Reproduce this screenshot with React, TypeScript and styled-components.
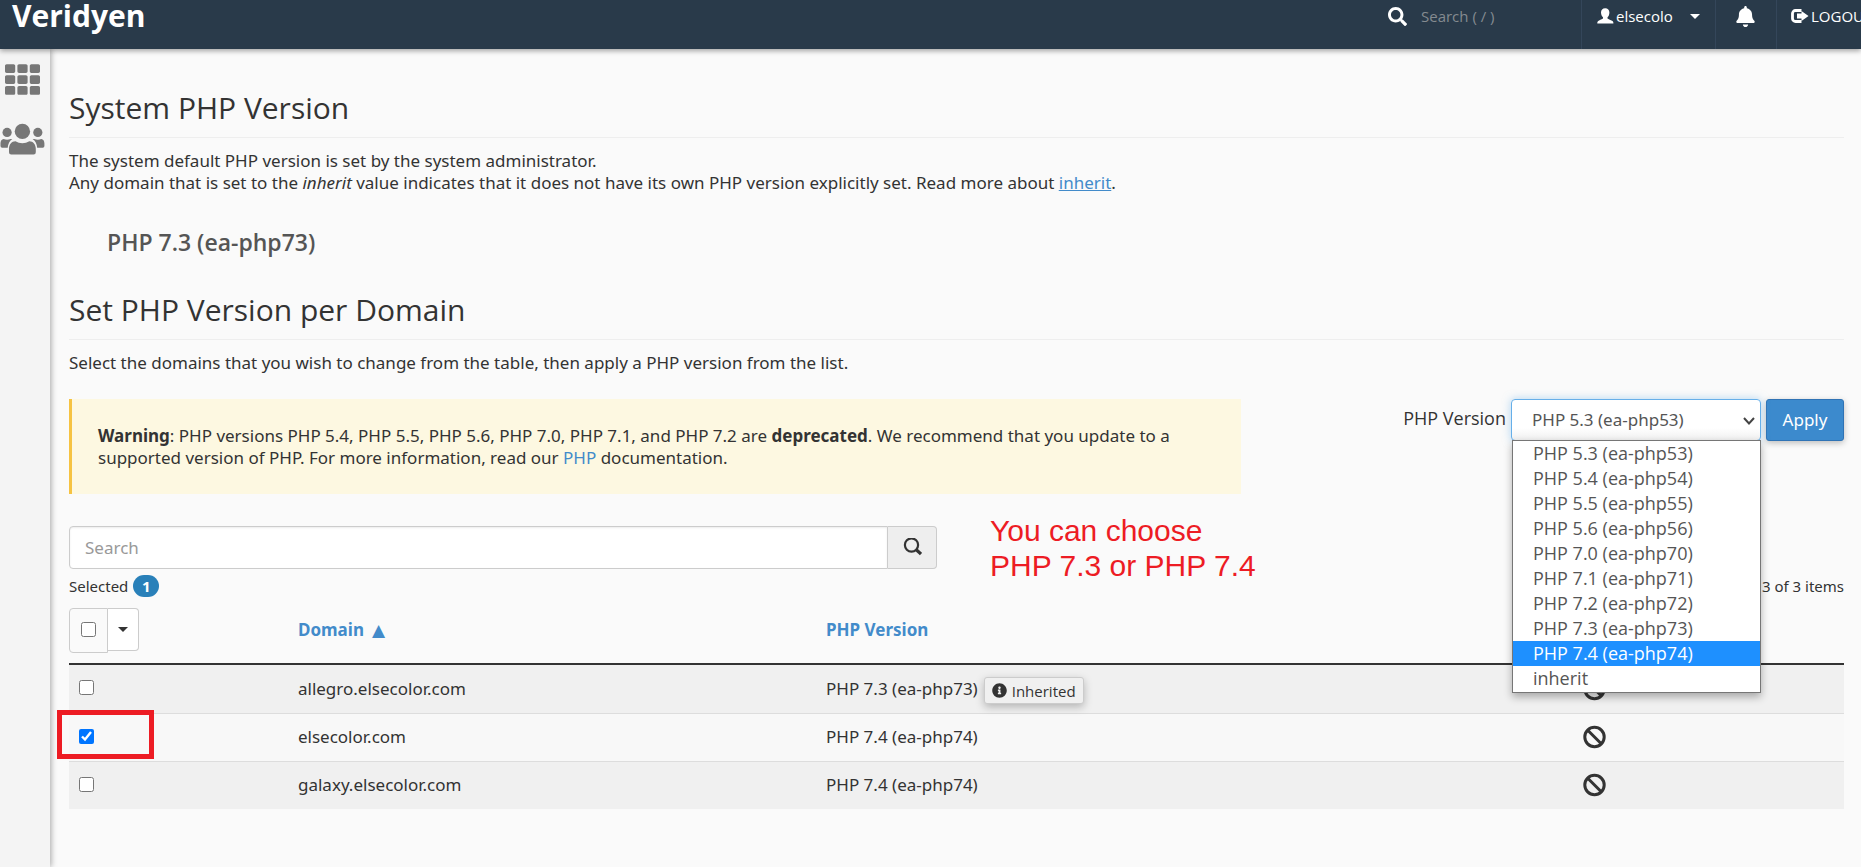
import React, { useState } from "react";
import styled, { createGlobalStyle, css } from "styled-components";
import { FaSearch, FaTh, FaBell, FaInfoCircle } from "react-icons/fa";

const GlobalStyle = createGlobalStyle`
  *, *::before, *::after { box-sizing: border-box; }
  body {
    margin: 0;
    background: #fafafa;
    color: #333;
    font-family: "Noto Sans", "Open Sans", sans-serif;
    font-size: 17px;
    line-height: 22px;
    overflow-x: hidden;
  }
  button, input, select { font: inherit; color: inherit; }
`;

const Page = styled.div`
  display: flex;
  flex-direction: column;
  min-height: 100vh;
`;

const TopBar = styled.header`
  position: relative;
  z-index: 2;
  display: flex;
  align-items: stretch;
  justify-content: space-between;
  height: 49px;
  background: #293a4a;
  color: #fff;
  box-shadow: 0 2px 5px rgba(0, 0, 0, 0.35);
  overflow: hidden;
  font-family: "Open Sans", sans-serif;
  font-size: 15px;
`;

const Brand = styled.a`
  padding-left: 12px;
  color: #fff;
  font-size: 30px;
  font-weight: 700;
  line-height: 32px;
  text-decoration: none;
`;

const TopNav = styled.nav`
  display: flex;
  width: 473px;
  flex: none;
`;

const TopSearch = styled.label`
  display: flex;
  gap: 14px;
  width: 193px;
  flex: none;
  height: 32px;
  align-items: center;
`;

const TopSearchInput = styled.input`
  width: 150px;
  padding: 0;
  border: 0;
  outline: 0;
  background: transparent;
  &::placeholder { color: #848a90; opacity: 1; }
`;

const NavItem = styled.div<{ $width: number; $pad: number }>`
  flex: none;
  width: ${(p) => p.$width}px;
  padding-left: ${(p) => p.$pad}px;
  border-left: 1px solid #34465a;
`;

const NavButton = styled.button`
  display: flex;
  align-items: center;
  gap: 2px;
  height: 32px;
  padding: 0;
  border: 0;
  background: none;
  white-space: nowrap;
`;

const Caret = styled.span<{ $gap?: number }>`
  margin-left: ${(p) => p.$gap ?? 0}px;
  border: 5px solid transparent;
  border-top-color: currentColor;
  border-bottom: 0;
`;

const Body = styled.div`
  display: flex;
  flex: 1;
`;

const SideBar = styled.nav`
  flex: none;
  width: 50px;
  display: flex;
  flex-direction: column;
  gap: 20px;
  padding-top: 10px;
  background: #f4f4f4;
  box-shadow: 1px 0 6px rgba(0, 0, 0, 0.35);
  color: #777;
`;

const SideLink = styled.a`
  display: flex;
  align-items: center;
  justify-content: center;
  width: 45px;
  height: 40px;
  color: inherit;
`;

const Content = styled.main`
  flex: 1;
  min-width: 0;
  padding: 38px 17px 40px 19px;
`;

const Heading = styled.h2`
  margin: 0 0 12px;
  padding-bottom: 9px;
  border-bottom: 1px solid #eee;
  font-family: "Open Sans", sans-serif;
  font-size: 30px;
  font-weight: 400;
  line-height: 41px;
`;

const Text = styled.p`
  margin: 0;
`;

const TextLink = styled.a<{ $underline?: boolean }>`
  color: #428bca;
  text-decoration: ${(p) => (p.$underline ? "underline" : "none")};
`;

const SystemVersion = styled.p`
  margin: 34px 0 33px;
  padding-left: 38px;
  color: #555;
  font-family: "Open Sans", sans-serif;
  font-size: 23px;
  font-weight: 600;
  line-height: 28px;
`;

const ControlRow = styled.div`
  display: flex;
  justify-content: space-between;
  align-items: flex-start;
  margin-top: 25px;
`;

const Warning = styled.div`
  width: 66%;
  min-height: 95px;
  padding: 26px 40px 25px 26px;
  border-left: 3px solid #f6c342;
  background: #fdf8e1;
`;

const ApplyForm = styled.form`
  display: flex;
  align-items: flex-start;
  gap: 5px;
`;

const Label = styled.label`
  font-family: "Open Sans", sans-serif;
  font-size: 18px;
  line-height: 38px;
`;

const SelectBox = styled.div`
  position: relative;
  width: 250px;
`;

const VersionSelect = styled.select`
  appearance: none;
  display: block;
  width: 100%;
  height: 42px;
  padding: 0 20px;
  border: 1px solid #66afe9;
  border-radius: 4px;
  outline: 0;
  background: linear-gradient(#fff 70%, #f0f0f0);
  box-shadow: 0 0 9px rgba(102, 175, 233, 0.5);
  color: #555;
`;

const Chevron = styled.svg`
  position: absolute;
  right: 5px;
  top: 17px;
  pointer-events: none;
`;

const OptionList = styled.ul`
  position: absolute;
  z-index: 3;
  top: 41px;
  left: 1px;
  right: 0;
  margin: 0;
  padding: 0 0 1px;
  border: 1px solid #767676;
  background: #fff;
  box-shadow: 0 4px 8px rgba(0, 0, 0, 0.3);
  font-family: "Open Sans", sans-serif;
  font-size: 18px;
  list-style: none;
`;

const Option = styled.li<{ $active: boolean }>`
  padding-left: 20px;
  color: ${(p) => (p.$active ? "#fff" : "#555")};
  background: ${(p) => (p.$active ? "#1e90ff" : "transparent")};
  line-height: 25px;
`;

const ApplyButton = styled.button`
  width: 78px;
  height: 42px;
  padding: 0;
  border: 1px solid #2f73b5;
  border-radius: 3px;
  background: #3c8acd;
  box-shadow: 0 2px 6px rgba(0, 0, 0, 0.25);
  color: #fff;
`;

const FilterRow = styled.div`
  display: flex;
  align-items: flex-start;
  margin-top: 32px;
`;

const SearchGroup = styled.form`
  display: flex;
  width: 48.9%;
  height: 43px;
`;

const SearchInput = styled.input`
  flex: 1;
  min-width: 0;
  padding: 0 15px;
  border: 1px solid #ccc;
  border-radius: 4px 0 0 4px;
  outline: 0;
  background: #fff;
  box-shadow: inset 0 1px 2px rgba(0, 0, 0, 0.08);
  &::placeholder { color: #999; opacity: 1; }
`;

const SearchButton = styled.button`
  display: flex;
  align-items: center;
  justify-content: center;
  width: 49px;
  padding: 0;
  border: 1px solid #ccc;
  border-left: 0;
  border-radius: 0 4px 4px 0;
  background: #eee;
`;

const Note = styled.p`
  margin: -13px 0 -14px 53px;
  color: #ed1c24;
  font-family: "Liberation Sans", Arial, sans-serif;
  font-size: 30px;
  line-height: 35px;
`;

const StatusRow = styled.div`
  display: flex;
  justify-content: space-between;
  align-items: center;
  margin-top: 6px;
  font-size: 15px;
`;

const Selected = styled.span`
  display: flex;
  align-items: center;
  gap: 5px;
`;

const Badge = styled.span`
  width: 26px;
  border-radius: 11px;
  background: #2980b9;
  color: #fff;
  font-weight: 700;
  text-align: center;
`;

const Table = styled.table`
  width: 100%;
  margin-top: 10px;
  border-collapse: collapse;
  table-layout: fixed;
`;

const HeadCell = styled.th<{ $width: string }>`
  width: ${(p) => p.$width};
  height: 57px;
  padding: 0 0 10px;
  border-bottom: 2px solid #333;
  color: #428bca;
  font-weight: 700;
  text-align: left;
`;

const Row = styled.tr<{ $striped: boolean }>`
  height: 48px;
  background: ${(p) => (p.$striped ? "#f0f0f0" : "#f8f8f8")};
  &:first-child { height: 49px; }
  & + & { border-top: 1px solid #ddd; }
`;

const Cell = styled.td<{ $action?: boolean }>`
  position: relative;
  padding: 0;
  vertical-align: middle;
  ${(p) => p.$action && css`line-height: 0;`}
`;

const SortButton = styled.button`
  display: flex;
  align-items: center;
  gap: 8px;
  padding: 0;
  border: 0;
  background: none;
  font-weight: 700;
`;

const SortArrow = styled.span`
  font-family: "DejaVu Sans", sans-serif;
  font-weight: 400;
`;

const SelectAll = styled.div`
  display: flex;
  align-items: flex-start;
  color: #333;
`;

const SelectAllBox = styled.label`
  display: flex;
  justify-content: center;
  width: 39px;
  height: 45px;
  padding-top: 13px;
  border: 1px solid #ccc;
  border-radius: 4px 0 0 4px;
`;

const MenuButton = styled.button`
  display: flex;
  align-items: center;
  justify-content: center;
  width: 31px;
  height: 43px;
  padding: 0;
  border: 1px solid #ccc;
  border-left: 0;
  border-radius: 0 4px 4px 0;
  background: #fff;
`;

const Check = styled.input`
  display: block;
  width: 15px;
  height: 15px;
  margin: 0;
  accent-color: #0075ff;
`;

const RowCheck = styled(Check)`
  margin: 0 0 2px 10px;
`;

const Highlight = styled.span`
  position: absolute;
  top: -4px;
  left: -12px;
  width: 97px;
  height: 49px;
  border: 5px solid #ed1c24;
  pointer-events: none;
`;

const VersionCell = styled.div`
  display: flex;
  align-items: center;
  gap: 6px;
`;

const Inherited = styled.span`
  display: flex;
  align-items: center;
  gap: 5px;
  height: 27px;
  margin-top: 4px;
  padding: 0 7px;
  border: 1px solid #ccc;
  border-radius: 3px;
  background: #f0f0f0;
  box-shadow: 0 3px 8px rgba(0, 0, 0, 0.25);
  font-family: "Open Sans", sans-serif;
  font-size: 15px;
`;

const BanIcon = () => (
  <svg width="24" height="24" viewBox="0 0 24 24" fill="none" stroke="#333" strokeWidth="3" aria-label="No PHP-FPM" role="img">
    <circle cx="12.5" cy="12" r="9.7" />
    <path d="M6 5.500 19 18.500" />
  </svg>
);

const UsersIcon = () => (
  <svg width="45" height="32" viewBox="0 0 45 32" fill="currentColor" aria-hidden="true">
    <circle cx="22.4" cy="8.400" r="7.700" />
    <circle cx="7.100" cy="9.400" r="4.600" />
    <circle cx="37.800" cy="9.400" r="4.600" />
    <path d="M15.500 18.200c4 2.600 9.800 2.600 13.800 0 4 0 6.500 3.400 6.500 7.600v3.400a2.200 2.200 0 0 1-2.200 2.200H11.200A2.200 2.200 0 0 1 9 29.200v-3.400c0-4.200 2.500-7.600 6.500-7.600z" />
    <path d="M3.600 16c2.300 1.100 4.600 1.100 7 0h1.700c-2.600 1.700-4.300 4.900-4.600 8.700H2.200A1.700 1.700 0 0 1 .5 23v-2.700C.5 18 1.700 16.200 3.600 16z" />
    <path d="M41.300 16c-2.300 1.100-4.600 1.100-7 0h-1.700c2.600 1.700 4.300 4.900 4.600 8.700h5.500a1.700 1.700 0 0 0 1.700-1.700v-2.700c0-2.300-1.200-4.100-3.100-4.300z" />
  </svg>
);

const UserIcon = () => (
  <svg width="17" height="16" viewBox="0 0 17 16" fill="#fff" aria-hidden="true">
    <path d="M8.2 0.3c2.6 0 4.2 1.7 4.2 4.2 0 2.200-.9 3.900-1.900 4.800v1.200c1.800 1.100 3.900 1.800 5 2.500.7.5.9 1.200.9 2.400H.3c0-1.300.2-1.900.9-2.400 1.100-.7 3.100-1.500 4.800-2.500V9.300C5 8.400 4 6.700 4 4.500 4 2 5.600.3 8.200.3z" />
  </svg>
);

const LogoutIcon = () => (
  <svg width="18" height="14" viewBox="0 0 18 14" aria-hidden="true">
    <path d="M10.500 1.500H4.500a3 3 0 0 0-3 3v5a3 3 0 0 0 3 3h6" fill="none" stroke="#fff" strokeWidth="2.800" />
    <path d="M10.500 2 17.500 7 10.500 12V9.500H6V4.500h4.500z" fill="#fff" />
  </svg>
);

const SearchIcon = () => (
  <svg width="20" height="20" viewBox="-1 1 20 20" fill="none" stroke="#333" aria-hidden="true">
    <circle cx="8.500" cy="8" r="6.600" strokeWidth="2.200" />
    <path d="M13 12.500 18 17" strokeWidth="3.200" />
  </svg>
);

const versions = [
  "PHP 5.3 (ea-php53)",
  "PHP 5.4 (ea-php54)",
  "PHP 5.5 (ea-php55)",
  "PHP 5.6 (ea-php56)",
  "PHP 7.0 (ea-php70)",
  "PHP 7.1 (ea-php71)",
  "PHP 7.2 (ea-php72)",
  "PHP 7.3 (ea-php73)",
  "PHP 7.4 (ea-php74)",
  "inherit",
];

const domains = [
  { name: "allegro.elsecolor.com", version: "PHP 7.3 (ea-php73)", inherited: true },
  { name: "elsecolor.com", version: "PHP 7.4 (ea-php74)", inherited: false },
  { name: "galaxy.elsecolor.com", version: "PHP 7.4 (ea-php74)", inherited: false },
];

export default function App() {
  const [picked, setPicked] = useState<string[]>(["elsecolor.com"]);
  const [version, setVersion] = useState(versions[0]);
  const [active, setActive] = useState("PHP 7.4 (ea-php74)");

  const toggle = (name: string) =>
    setPicked((old) => (old.includes(name) ? old.filter((n) => n !== name) : [...old, name]));
  const allPicked = picked.length === domains.length;

  return (
    <Page>
      <GlobalStyle />
      <TopBar>
        <Brand href="#">Veridyen</Brand>
        <TopNav aria-label="Account">
          <TopSearch>
            <FaSearch size={19} />
            <TopSearchInput type="text" placeholder="Search ( / )" aria-label="Search features" />
          </TopSearch>
          <NavItem $width={134} $pad={15}>
            <NavButton type="button"><UserIcon />elsecolo<Caret $gap={15} /></NavButton>
          </NavItem>
          <NavItem $width={61} $pad={19}>
            <NavButton type="button" aria-label="Notifications"><FaBell size={21} /></NavButton>
          </NavItem>
          <NavItem $width={120} $pad={14}>
            <NavButton type="button"><LogoutIcon />LOGOUT</NavButton>
          </NavItem>
        </TopNav>
      </TopBar>
      <Body>
        <SideBar aria-label="Main">
          <SideLink href="#" aria-label="Home"><FaTh size={35} /></SideLink>
          <SideLink href="#" aria-label="User manager"><UsersIcon /></SideLink>
        </SideBar>
        <Content>
          <Heading>System PHP Version</Heading>
          <Text>
            The system default PHP version is set by the system administrator.
            <br />
            Any domain that is set to the <em>inherit</em> value indicates that it does not have its own PHP
            version explicitly set. Read more about <TextLink href="#" $underline>inherit</TextLink>.
          </Text>
          <SystemVersion>PHP 7.3 (ea-php73)</SystemVersion>
          <Heading>Set PHP Version per Domain</Heading>
          <Text>Select the domains that you wish to change from the table, then apply a PHP version from the list.</Text>
          <ControlRow>
            <Warning>
              <strong>Warning</strong>: PHP versions PHP 5.4, PHP 5.5, PHP 5.6, PHP 7.0, PHP 7.1, and PHP 7.2
              are <strong>deprecated</strong>. We recommend that you update to a supported version of PHP. For
              more information, read our <TextLink href="#">PHP</TextLink> documentation.
            </Warning>
            <ApplyForm onSubmit={(e) => e.preventDefault()}>
              <Label htmlFor="version">PHP Version</Label>
              <SelectBox>
                <VersionSelect id="version" value={version} onChange={(e) => setVersion(e.target.value)}>
                  {versions.map((v) => <option key={v}>{v}</option>)}
                </VersionSelect>
                <Chevron width="14" height="10" viewBox="0 0 14 10" fill="none" stroke="#444" strokeWidth="2">
                  <path d="M2 2 7 7.500 12 2" />
                </Chevron>
                <OptionList>
                  {versions.map((v) => (
                    <Option key={v} $active={v === active} onMouseEnter={() => setActive(v)}>{v}</Option>
                  ))}
                </OptionList>
              </SelectBox>
              <ApplyButton type="submit">Apply</ApplyButton>
            </ApplyForm>
          </ControlRow>
          <FilterRow>
            <SearchGroup onSubmit={(e) => e.preventDefault()}>
              <SearchInput type="text" placeholder="Search" aria-label="Search domains" />
              <SearchButton type="submit" aria-label="Search"><SearchIcon /></SearchButton>
            </SearchGroup>
            <Note>You can choose<br />PHP 7.3 or PHP 7.4</Note>
          </FilterRow>
          <StatusRow>
            <Selected>Selected <Badge>{picked.length}</Badge></Selected>
            <span>3 of 3 items</span>
          </StatusRow>
          <Table>
            <thead>
              <tr>
                <HeadCell $width="12.9%">
                  <SelectAll>
                    <SelectAllBox>
                      <Check
                        type="checkbox"
                        aria-label="Select all domains"
                        checked={allPicked}
                        onChange={() => setPicked(allPicked ? [] : domains.map((d) => d.name))}
                      />
                    </SelectAllBox>
                    <MenuButton type="button" aria-label="Selection options"><Caret /></MenuButton>
                  </SelectAll>
                </HeadCell>
                <HeadCell $width="29.75%"><SortButton type="button">Domain <SortArrow>▲</SortArrow></SortButton></HeadCell>
                <HeadCell $width="42.6%"><SortButton type="button">PHP Version</SortButton></HeadCell>
                <HeadCell $width="14.75%" aria-label="PHP-FPM" />
              </tr>
            </thead>
            <tbody>
              {domains.map((d, i) => (
                <Row key={d.name} $striped={i % 2 === 0}>
                  <Cell>
                    <RowCheck
                      type="checkbox"
                      aria-label={`Select ${d.name}`}
                      checked={picked.includes(d.name)}
                      onChange={() => toggle(d.name)}
                    />
                    {i === 1 && <Highlight />}
                  </Cell>
                  <Cell>{d.name}</Cell>
                  <Cell>
                    <VersionCell>
                      {d.version}
                      {d.inherited && <Inherited><FaInfoCircle size={15} />Inherited</Inherited>}
                    </VersionCell>
                  </Cell>
                  <Cell $action><BanIcon /></Cell>
                </Row>
              ))}
            </tbody>
          </Table>
        </Content>
      </Body>
    </Page>
  );
}
